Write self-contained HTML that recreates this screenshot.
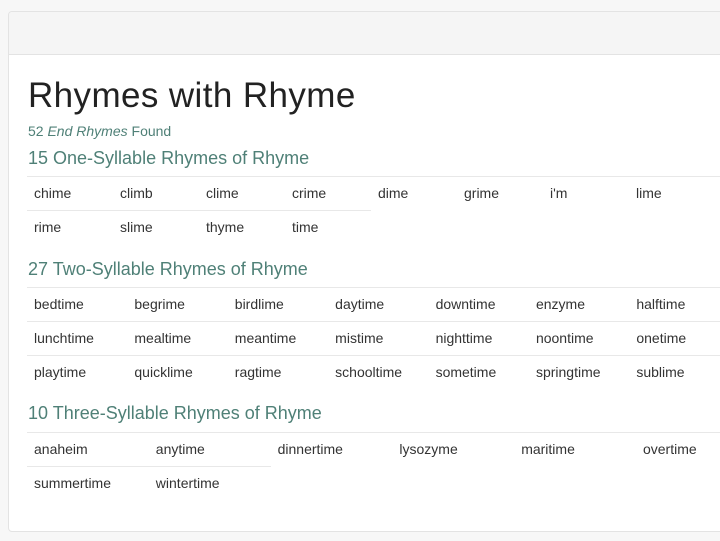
<!DOCTYPE html>
<html><head><meta charset="utf-8"><style>
*{margin:0;padding:0;box-sizing:border-box}
body{width:720px;height:541px;background:#f7f7f7;font-family:"Liberation Sans",sans-serif;position:relative;overflow:hidden}
.card{position:absolute;left:8px;top:11px;width:730px;height:521px;background:#fff;border:1px solid #e3e3e3;border-radius:4px;overflow:hidden}
.hd{height:43px;background:#f5f5f5;border-bottom:1px solid #e3e3e3}
h1{position:absolute;left:19px;top:64px;font-size:35px;font-weight:normal;color:#222;letter-spacing:0.4px}
.found{position:absolute;left:19px;top:111px;font-size:14px;color:#4f8077}
h2{position:absolute;left:19px;font-size:18px;font-weight:normal;color:#4f8077}
.row{position:absolute;left:18px;display:flex}
.c{height:34px;border-top:1px solid #e8e8e8;padding:6px 7px;font-size:14px;color:#333;line-height:20px;white-space:nowrap}
</style></head><body>
<div class="card">
<div class="hd"></div>
<h1>Rhymes with Rhyme</h1>
<div class="found">52 <i>End Rhymes</i> Found</div>
<h2 style="top:136px">15 One-Syllable Rhymes of Rhyme</h2>
<div class="row" style="top:164px"><div class="c" style="width:86px">chime</div><div class="c" style="width:86px">climb</div><div class="c" style="width:86px">clime</div><div class="c" style="width:86px">crime</div><div class="c" style="width:86px">dime</div><div class="c" style="width:86px">grime</div><div class="c" style="width:86px">i'm</div><div class="c" style="width:100px">lime</div></div>
<div class="row" style="top:198px"><div class="c" style="width:86px">rime</div><div class="c" style="width:86px">slime</div><div class="c" style="width:86px">thyme</div><div class="c" style="width:86px">time</div></div>
<h2 style="top:247px">27 Two-Syllable Rhymes of Rhyme</h2>
<div class="row" style="top:275px"><div class="c" style="width:100.4px">bedtime</div><div class="c" style="width:100.4px">begrime</div><div class="c" style="width:100.4px">birdlime</div><div class="c" style="width:100.4px">daytime</div><div class="c" style="width:100.4px">downtime</div><div class="c" style="width:100.4px">enzyme</div><div class="c" style="width:100.4px">halftime</div></div>
<div class="row" style="top:309px"><div class="c" style="width:100.4px">lunchtime</div><div class="c" style="width:100.4px">mealtime</div><div class="c" style="width:100.4px">meantime</div><div class="c" style="width:100.4px">mistime</div><div class="c" style="width:100.4px">nighttime</div><div class="c" style="width:100.4px">noontime</div><div class="c" style="width:100.4px">onetime</div></div>
<div class="row" style="top:343px"><div class="c" style="width:100.4px">playtime</div><div class="c" style="width:100.4px">quicklime</div><div class="c" style="width:100.4px">ragtime</div><div class="c" style="width:100.4px">schooltime</div><div class="c" style="width:100.4px">sometime</div><div class="c" style="width:100.4px">springtime</div><div class="c" style="width:100.4px">sublime</div></div>
<h2 style="top:391px">10 Three-Syllable Rhymes of Rhyme</h2>
<div class="row" style="top:420px"><div class="c" style="width:121.8px">anaheim</div><div class="c" style="width:121.8px">anytime</div><div class="c" style="width:121.8px">dinnertime</div><div class="c" style="width:121.8px">lysozyme</div><div class="c" style="width:121.8px">maritime</div><div class="c" style="width:121.8px">overtime</div></div>
<div class="row" style="top:454px"><div class="c" style="width:121.8px">summertime</div><div class="c" style="width:121.8px">wintertime</div></div>
</div>
</body></html>
